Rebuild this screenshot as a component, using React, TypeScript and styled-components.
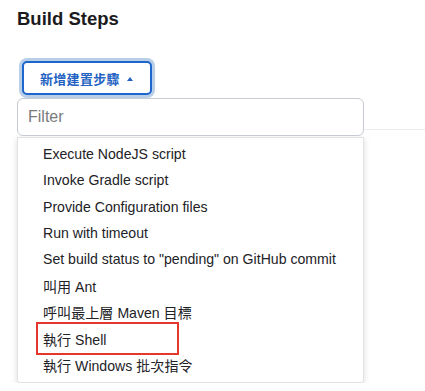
import { FC } from "react";
import styled, { createGlobalStyle } from "styled-components";

const GlobalStyle = createGlobalStyle`
  html, body {
    margin: 0;
    padding: 0;
    background: #ffffff;
    font-family: "Liberation Sans", Arial, "Noto Sans CJK TC", sans-serif;
    color: #1c1c1e;
  }
`;

const items = [
  "Execute NodeJS script",
  "Invoke Gradle script",
  "Provide Configuration files",
  "Run with timeout",
  'Set build status to "pending" on GitHub commit',
  "叫用 Ant",
  "呼叫最上層 Maven 目標",
  "執行 Shell",
  "執行 Windows 批次指令",
];

const Page = styled.div`
  padding: 8px 0 0 17px;
  width: 408px;
`;

const Title = styled.h2`
  margin: 0;
  font-size: 18.5px;
  font-weight: 700;
  line-height: 22px;
  color: #1b1b1d;
`;

const Section = styled.div`
  margin-top: 31px;
`;

const AddButton = styled.button`
  display: flex;
  align-items: center;
  gap: 7px;
  margin-left: 5px;
  height: 34px;
  width: 130px;
  padding: 0 0 0 16px;
  border: 2px solid #1f66cc;
  border-radius: 5px;
  background: #ffffff;
  box-shadow: 0 0 0 3px #b9cfe8;
  color: #2462c2;
  font-family: "Noto Sans CJK TC", sans-serif;
  font-size: 13px;
  font-weight: 700;
  letter-spacing: 0.3px;
`;

const Caret = styled.span`
  width: 0;
  height: 0;
  border-left: 3.5px solid transparent;
  border-right: 3.5px solid transparent;
  border-bottom: 4px solid #2462c2;
  margin-top: 1px;
`;

const FilterRow = styled.div`
  display: flex;
  align-items: flex-end;
  margin-top: 3px;
`;

const FilterBox = styled.div`
  box-sizing: border-box;
  width: 347px;
  height: 38px;
  border: 1.5px solid #c6cbd1;
  border-radius: 6px;
  display: flex;
  align-items: center;
  padding-left: 10px;
  color: #7a7a7e;
  font-size: 16px;
  background: #fff;
`;

const Rule = styled.div`
  flex: 1;
  height: 1px;
  background: #ececee;
  margin-bottom: 6px;
`;

const Menu = styled.ul`
  box-sizing: border-box;
  list-style: none;
  margin: 1px 0 0;
  padding: 3px 0 4px;
  width: 347px;
  border: 1px solid #e0e2e5;
  border-radius: 0 0 3px 3px;
  box-shadow: 0 2px 6px rgba(0, 0, 0, 0.14);
  background: #fff;
`;

const Item = styled.li<{ $marked?: boolean }>`
  height: 26.3px;
  display: flex;
  align-items: center;
  padding-left: 25px;
  font-size: 14.1px;
  color: #222226;
  white-space: nowrap;
  ${(p) =>
    p.$marked &&
    `
    outline: 2px solid #e5372b;
    margin-left: 20px;
    padding-left: 5px;
    width: 134px;
    height: 29px;
    margin-top: -1px;
    margin-bottom: -1.7px;
  `}
`;

const App: FC = () => {
  return (
    <>
      <GlobalStyle />
      <Page>
        <Title>Build Steps</Title>
        <Section>
          <AddButton>
            新增建置步驟
            <Caret />
          </AddButton>
          <FilterRow>
            <FilterBox>Filter</FilterBox>
            <Rule />
          </FilterRow>
          <Menu>
            {items.map((label) => (
              <Item key={label} $marked={label === "執行 Shell"}>
                {label}
              </Item>
            ))}
          </Menu>
        </Section>
      </Page>
    </>
  );
};

export default App;
